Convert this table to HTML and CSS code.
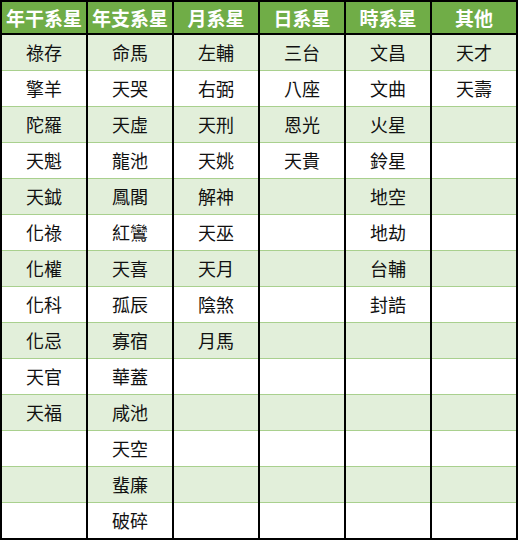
FILE: index.html
```html
<!DOCTYPE html>
<html lang="zh-Hant">
<head>
<meta charset="utf-8">
<title>星曜分類</title>
<link rel="stylesheet" href="styles.css">
</head>
<body>
<table class="stars">
<thead>
<tr><th>年干系星</th><th>年支系星</th><th>月系星</th><th>日系星</th><th>時系星</th><th>其他</th></tr>
</thead>
<tbody>
<tr><td>祿存</td><td>命馬</td><td>左輔</td><td>三台</td><td>文昌</td><td>天才</td></tr>
<tr><td>擎羊</td><td>天哭</td><td>右弼</td><td>八座</td><td>文曲</td><td>天壽</td></tr>
<tr><td>陀羅</td><td>天虛</td><td>天刑</td><td>恩光</td><td>火星</td><td></td></tr>
<tr><td>天魁</td><td>龍池</td><td>天姚</td><td>天貴</td><td>鈴星</td><td></td></tr>
<tr><td>天鉞</td><td>鳳閣</td><td>解神</td><td></td><td>地空</td><td></td></tr>
<tr><td>化祿</td><td>紅鸞</td><td>天巫</td><td></td><td>地劫</td><td></td></tr>
<tr><td>化權</td><td>天喜</td><td>天月</td><td></td><td>台輔</td><td></td></tr>
<tr><td>化科</td><td>孤辰</td><td>陰煞</td><td></td><td>封誥</td><td></td></tr>
<tr><td>化忌</td><td>寡宿</td><td>月馬</td><td></td><td></td><td></td></tr>
<tr><td>天官</td><td>華蓋</td><td></td><td></td><td></td><td></td></tr>
<tr><td>天福</td><td>咸池</td><td></td><td></td><td></td><td></td></tr>
<tr><td></td><td>天空</td><td></td><td></td><td></td><td></td></tr>
<tr><td></td><td>蜚廉</td><td></td><td></td><td></td><td></td></tr>
<tr><td></td><td>破碎</td><td></td><td></td><td></td><td></td></tr>
</tbody>
</table>
</body>
</html>
```
FILE: styles.css
```css
html, body {
  margin: 0;
  padding: 0;
  background: #ffffff;
}
body {
  font-family: "Noto Sans CJK TC", "Noto Sans CJK SC", sans-serif;
}
.stars {
  border-collapse: collapse;
  table-layout: fixed;
  width: 518px;
  border: 2px solid #000;
}
.stars th,
.stars td {
  width: 84px;
  padding: 0;
  text-align: center;
  vertical-align: middle;
  border-left: 2px solid #000;
  border-right: 2px solid #000;
}
.stars th {
  height: 31px;
  background: #70ad47;
  color: #ffffff;
  font-size: 19px;
  font-weight: bold;
  line-height: 31px;
  border-bottom: 2px solid #000;
}
.stars td {
  height: 35px;
  font-size: 18px;
  line-height: 35px;
  color: #111;
  border-bottom: 1px solid #a9d08e;
}
.stars tbody tr:nth-child(odd) td {
  background: #e2efda;
}
.stars tbody tr:last-child td {
  border-bottom: 2px solid #000;
}
```
